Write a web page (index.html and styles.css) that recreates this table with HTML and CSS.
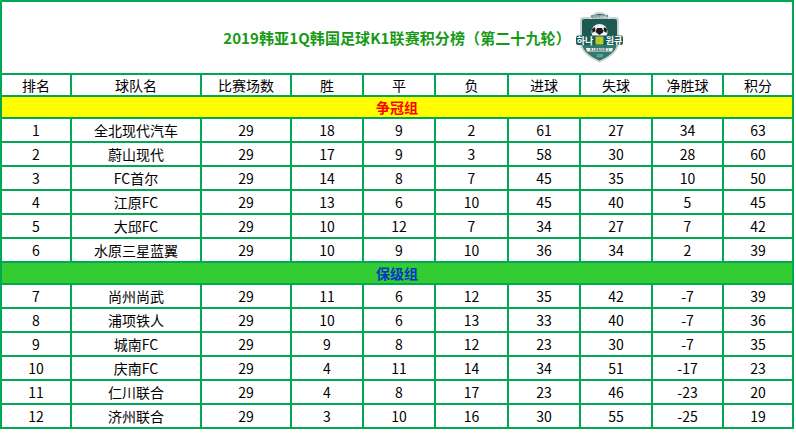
FILE: index.html
```html
<!DOCTYPE html>
<html lang="zh-CN">
<head>
<meta charset="utf-8">
<title>2019韩亚1Q韩国足球K1联赛积分榜</title>
<link rel="stylesheet" href="styles.css">
</head>
<body>
<div class="board">
  <div class="title">
    <span class="title-text">2019韩亚1Q韩国足球K1联赛积分榜（第二十九轮）</span>
    <svg class="logo" viewBox="0 0 47 52" width="47" height="52" aria-hidden="true">
      <path d="M4 9 Q4 6 7 6 L15 6 Q17 1 23.5 1 Q30 1 32 6 L40 6 Q43 6 43 9 L43 31 Q43 43 23.5 51.5 Q4 43 4 31 Z" fill="#c9d3cf"/>
      <path d="M6 10 Q6 8 8 8 L16 8 Q18 3 23.5 3 Q29 3 31 8 L39 8 Q41 8 41 10 L41 31 Q41 41.5 23.5 49.5 Q6 41.5 6 31 Z" fill="#1d5a52"/>
      <path d="M6 33 L41 33 Q40 42 23.5 49.5 Q7 42 6 33 Z" fill="#2e7b6e"/>
      <rect x="14" y="4.2" width="19" height="3.6" rx="1" fill="#e8eeec"/>
      <text x="23.5" y="7.1" font-size="3" font-family="Noto Sans CJK KR, sans-serif" font-weight="700" fill="#1d5a52" text-anchor="middle">KEB하나은행</text>
      <circle cx="23.5" cy="21" r="8" fill="#f4f4f4"/>
      <path d="M21 17 L26 17 L27.5 21 L23.5 24 L19.5 21 Z" fill="#1a1a1a"/>
      <path d="M16 18 L19 16 L19.5 20 L16.5 22 Z" fill="#1a1a1a"/>
      <path d="M31 18 L28 16 L27.5 20 L30.5 22 Z" fill="#1a1a1a"/>
      <path d="M20 27.5 L23.5 26 L27 27.5 L26 29 L21 29 Z" fill="#1a1a1a"/>
      <rect x="0" y="24.5" width="47" height="9.5" rx="2" fill="#1d5a52"/>
      <text x="9" y="32.6" font-size="9" font-family="Noto Sans CJK KR, sans-serif" font-weight="700" fill="#ffffff" text-anchor="middle">하나</text>
      <rect x="19.5" y="25.5" width="8" height="8" rx="1" fill="#9fd13a"/>
      <text x="23.5" y="32.6" font-size="8.5" font-family="Liberation Sans, sans-serif" font-weight="700" fill="#f5b800" text-anchor="middle">1</text>
      <text x="38" y="32.6" font-size="9" font-family="Noto Sans CJK KR, sans-serif" font-weight="700" fill="#ffffff" text-anchor="middle">원큐</text>
      <path d="M10 37 L37 37 L36 40.5 L11 40.5 Z" fill="#f2f2f2"/>
      <text x="23.5" y="40" font-size="3.2" font-family="Liberation Sans, sans-serif" font-weight="700" fill="#1d5a52" text-anchor="middle">K LEAGUE 1</text>
      <text x="23.5" y="45.5" font-size="2.8" font-family="Liberation Sans, sans-serif" fill="#cfe3dc" text-anchor="middle">2019</text>
    </svg>
  </div>

  <div class="cell head">排名</div><div class="cell head">球队名</div><div class="cell head">比赛场数</div><div class="cell head">胜</div><div class="cell head">平</div><div class="cell head">负</div><div class="cell head">进球</div><div class="cell head">失球</div><div class="cell head">净胜球</div><div class="cell head">积分</div>

  <div class="group group-top">争冠组</div>

  <div class="cell">1</div><div class="cell">全北现代汽车</div><div class="cell">29</div><div class="cell">18</div><div class="cell">9</div><div class="cell">2</div><div class="cell">61</div><div class="cell">27</div><div class="cell">34</div><div class="cell">63</div>
  <div class="cell">2</div><div class="cell">蔚山现代</div><div class="cell">29</div><div class="cell">17</div><div class="cell">9</div><div class="cell">3</div><div class="cell">58</div><div class="cell">30</div><div class="cell">28</div><div class="cell">60</div>
  <div class="cell">3</div><div class="cell">FC首尔</div><div class="cell">29</div><div class="cell">14</div><div class="cell">8</div><div class="cell">7</div><div class="cell">45</div><div class="cell">35</div><div class="cell">10</div><div class="cell">50</div>
  <div class="cell">4</div><div class="cell">江原FC</div><div class="cell">29</div><div class="cell">13</div><div class="cell">6</div><div class="cell">10</div><div class="cell">45</div><div class="cell">40</div><div class="cell">5</div><div class="cell">45</div>
  <div class="cell">5</div><div class="cell">大邱FC</div><div class="cell">29</div><div class="cell">10</div><div class="cell">12</div><div class="cell">7</div><div class="cell">34</div><div class="cell">27</div><div class="cell">7</div><div class="cell">42</div>
  <div class="cell">6</div><div class="cell">水原三星蓝翼</div><div class="cell">29</div><div class="cell">10</div><div class="cell">9</div><div class="cell">10</div><div class="cell">36</div><div class="cell">34</div><div class="cell">2</div><div class="cell">39</div>

  <div class="group group-bottom">保级组</div>

  <div class="cell">7</div><div class="cell">尚州尚武</div><div class="cell">29</div><div class="cell">11</div><div class="cell">6</div><div class="cell">12</div><div class="cell">35</div><div class="cell">42</div><div class="cell">-7</div><div class="cell">39</div>
  <div class="cell">8</div><div class="cell">浦项铁人</div><div class="cell">29</div><div class="cell">10</div><div class="cell">6</div><div class="cell">13</div><div class="cell">33</div><div class="cell">40</div><div class="cell">-7</div><div class="cell">36</div>
  <div class="cell">9</div><div class="cell">城南FC</div><div class="cell">29</div><div class="cell">9</div><div class="cell">8</div><div class="cell">12</div><div class="cell">23</div><div class="cell">30</div><div class="cell">-7</div><div class="cell">35</div>
  <div class="cell">10</div><div class="cell">庆南FC</div><div class="cell">29</div><div class="cell">4</div><div class="cell">11</div><div class="cell">14</div><div class="cell">34</div><div class="cell">51</div><div class="cell">-17</div><div class="cell">23</div>
  <div class="cell">11</div><div class="cell">仁川联合</div><div class="cell">29</div><div class="cell">4</div><div class="cell">8</div><div class="cell">17</div><div class="cell">23</div><div class="cell">46</div><div class="cell">-23</div><div class="cell">20</div>
  <div class="cell">12</div><div class="cell">济州联合</div><div class="cell">29</div><div class="cell">3</div><div class="cell">10</div><div class="cell">16</div><div class="cell">30</div><div class="cell">55</div><div class="cell">-25</div><div class="cell">19</div>
</div>
</body>
</html>
```

FILE: styles.css
```css
html, body {
  margin: 0;
  padding: 0;
  background: #ffffff;
}

body {
  font-family: "Noto Sans CJK SC", "Noto Sans", sans-serif;
  color: #000000;
}

.board {
  width: 794px;
  box-sizing: border-box;
  display: grid;
  grid-template-columns: 68px 128px 88px 70px 70px 71px 70px 70px 69px 68px;
  grid-auto-rows: auto;
  gap: 2px;
  padding: 2px;
  background: #00a852;
}

.title {
  grid-column: 1 / -1;
  height: 71px;
  background: #ffffff;
  display: flex;
  align-items: center;
  justify-content: center;
  gap: 5px;
}

.title-text {
  font-size: 15px;
  font-weight: 700;
  color: #169a16;
  line-height: 20px;
  letter-spacing: 0.1px;
}

.logo {
  display: block;
  margin-right: -52px;
  margin-top: -1px;
}

.cell {
  height: 22px;
  background: #ffffff;
  font-size: 14px;
  line-height: 22px;
  text-align: center;
  white-space: nowrap;
}

.cell.head {
  height: 20px;
  line-height: 20px;
}

.group {
  grid-column: 1 / -1;
  height: 20px;
  line-height: 20px;
  font-size: 14px;
  font-weight: 700;
  text-align: center;
}

.group-top {
  background: #ffff00;
  color: #ff0000;
}

.group-bottom {
  background: #33cc33;
  color: #0a35c8;
}
```
